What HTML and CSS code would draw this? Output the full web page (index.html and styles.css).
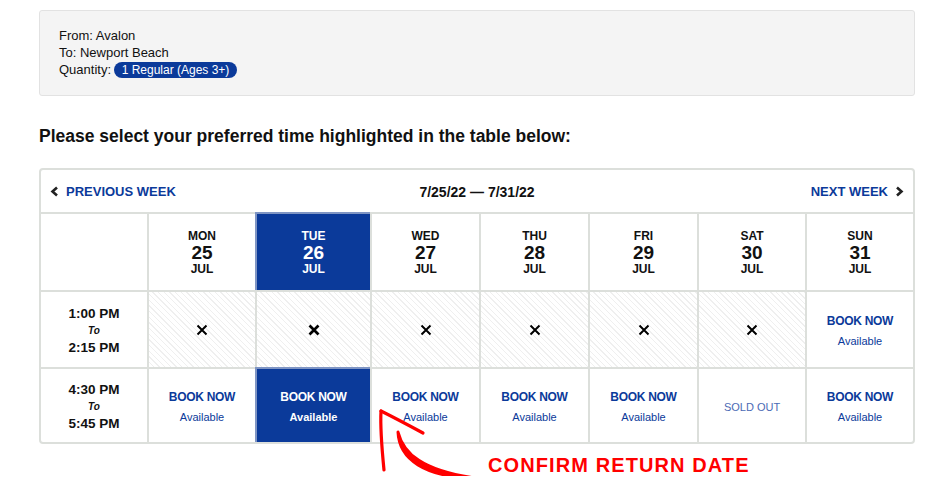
FILE: index.html
```html
<!DOCTYPE html>
<html>
<head>
<meta charset="utf-8">
<link rel="stylesheet" href="styles.css">
</head>
<body>
<div class="page">
  <div class="info">
    <div>From: Avalon</div>
    <div>To: Newport Beach</div>
    <div>Quantity: <span class="badge">1 Regular (Ages 3+)</span></div>
  </div>

  <h2 class="title">Please select your preferred time highlighted in the table below:</h2>

  <div class="sched">
    <div class="nav">
      <a class="navlink prev"><svg width="9" height="11" viewBox="0 0 9 11"><polyline points="7,1.5 2.5,5.5 7,9.5" fill="none" stroke="#222" stroke-width="2.6"/></svg>PREVIOUS WEEK</a>
      <span class="range">7/25/22 — 7/31/22</span>
      <a class="navlink next">NEXT WEEK<svg width="9" height="11" viewBox="0 0 9 11"><polyline points="2,1.5 6.5,5.5 2,9.5" fill="none" stroke="#222" stroke-width="2.6"/></svg></a>
    </div>
    <div class="grid">
      <div class="cell first"></div>
      <div class="cell day"><span class="dn">MON</span><span class="dd">25</span><span class="dm">JUL</span></div>
      <div class="cell day sel"><span class="dn">TUE</span><span class="dd">26</span><span class="dm">JUL</span></div>
      <div class="cell day"><span class="dn">WED</span><span class="dd">27</span><span class="dm">JUL</span></div>
      <div class="cell day"><span class="dn">THU</span><span class="dd">28</span><span class="dm">JUL</span></div>
      <div class="cell day"><span class="dn">FRI</span><span class="dd">29</span><span class="dm">JUL</span></div>
      <div class="cell day"><span class="dn">SAT</span><span class="dd">30</span><span class="dm">JUL</span></div>
      <div class="cell day"><span class="dn">SUN</span><span class="dd">31</span><span class="dm">JUL</span></div>

      <div class="cell first time"><span>1:00 PM</span><span class="to">To</span><span>2:15 PM</span></div>
      <div class="cell na"><svg class="x" width="12" height="12" viewBox="0 0 12 12"><path d="M1.5 1.5L10.5 10.5M10.5 1.5L1.5 10.5" stroke="#000" stroke-width="2"/></svg></div>
      <div class="cell na"><svg class="x" width="12" height="12" viewBox="0 0 12 12"><path d="M1.5 1.5L10.5 10.5M10.5 1.5L1.5 10.5" stroke="#000" stroke-width="2.7"/></svg></div>
      <div class="cell na"><svg class="x" width="12" height="12" viewBox="0 0 12 12"><path d="M1.5 1.5L10.5 10.5M10.5 1.5L1.5 10.5" stroke="#000" stroke-width="2"/></svg></div>
      <div class="cell na"><svg class="x" width="12" height="12" viewBox="0 0 12 12"><path d="M1.5 1.5L10.5 10.5M10.5 1.5L1.5 10.5" stroke="#000" stroke-width="2"/></svg></div>
      <div class="cell na"><svg class="x" width="12" height="12" viewBox="0 0 12 12"><path d="M1.5 1.5L10.5 10.5M10.5 1.5L1.5 10.5" stroke="#000" stroke-width="2"/></svg></div>
      <div class="cell na"><svg class="x" width="12" height="12" viewBox="0 0 12 12"><path d="M1.5 1.5L10.5 10.5M10.5 1.5L1.5 10.5" stroke="#000" stroke-width="2"/></svg></div>
      <div class="cell book"><span class="bn">BOOK NOW</span><span class="av">Available</span></div>

      <div class="cell first time"><span>4:30 PM</span><span class="to">To</span><span>5:45 PM</span></div>
      <div class="cell book"><span class="bn">BOOK NOW</span><span class="av">Available</span></div>
      <div class="cell book sel"><span class="bn">BOOK NOW</span><span class="av">Available</span></div>
      <div class="cell book"><span class="bn">BOOK NOW</span><span class="av">Available</span></div>
      <div class="cell book"><span class="bn">BOOK NOW</span><span class="av">Available</span></div>
      <div class="cell book"><span class="bn">BOOK NOW</span><span class="av">Available</span></div>
      <div class="cell sold"><span>SOLD OUT</span></div>
      <div class="cell book"><span class="bn">BOOK NOW</span><span class="av">Available</span></div>
    </div>
  </div>

  <div class="note">CONFIRM RETURN DATE</div>

  <svg class="arrow" width="120" height="90" viewBox="370 400 120 90">
    <path d="M381 411 C380 430 382 450 384 470" fill="none" stroke="#f00" stroke-width="3.2" stroke-linecap="round"/>
    <path d="M381 411 C395 418 410 426 423 433" fill="none" stroke="#f00" stroke-width="3.2" stroke-linecap="round"/>
    <path d="M398 432 C403 452 420 472 483 479 C422 478 399 458 398 432 Z" fill="#f00" stroke="#f00" stroke-width="3" stroke-linejoin="round"/>
  </svg>
</div>
</body>
</html>
```

FILE: styles.css
```css
* { box-sizing: border-box; }
html, body { margin: 0; padding: 0; background: #fff; }
body { font-family: "Liberation Sans", Arial, sans-serif; color: #111; }

.page {
  position: relative;
  width: 935px;
  padding: 10px 20px 0 39px;
}

.info {
  width: 876px;
  background: #f4f4f4;
  border: 1px solid #e2e2e2;
  border-radius: 3px;
  padding: 16px 19px 17px;
  font-size: 13px;
  line-height: 17px;
  color: #111;
}
.badge {
  display: inline-block;
  background: #0b3a9a;
  color: #fff;
  font-size: 12px;
  line-height: 16px;
  padding: 0 8px 0 8px;
  border-radius: 8px;
  margin-left: -1px;
}

.title {
  margin: 30px 0 22px;
  font-size: 17.5px;
  line-height: 20px;
  font-weight: bold;
  color: #111;
}

.sched {
  width: 876px;
  border: 2px solid #dcdfdb;
  border-radius: 4px;
  background: #fff;
}
.nav {
  height: 42px;
  display: grid;
  grid-template-columns: 1fr auto 1fr;
  align-items: center;
  padding: 1px 9px 0 9px;
  font-size: 13px;
  font-weight: bold;
}
.navlink {
  color: #0b3a9a;
  display: flex;
  align-items: center;
  gap: 7px;
}
.navlink.next { justify-self: end; }
.range { color: #111; font-size: 14px; }

.grid {
  display: grid;
  grid-template-columns: 106px 108px 115px 109px 109px 109px 108px 108px;
  grid-template-rows: 78px 77px 75px;
}
.cell {
  border-top: 2px solid #dcdfdb;
  border-left: 2px solid #dcdfdb;
  display: flex;
  flex-direction: column;
  align-items: center;
  justify-content: center;
  text-align: center;
}
.cell.first { border-left: none; }

.day { color: #111; font-weight: bold; padding-top: 2px; }
.dn { font-size: 12px; line-height: 14px; }
.dd { font-size: 19px; line-height: 19px; }
.dm { font-size: 12px; line-height: 15px; }
.day.sel { background: #0b3a9a; color: #fff; border-color: #7f95c4; }

.time { font-weight: bold; font-size: 13.5px; color: #111; padding-top: 2px; }
.time span { line-height: 17px; }
.time .to { font-style: italic; font-size: 10px; line-height: 17px; }

.na {
  background: repeating-linear-gradient(45deg, #fff 0, #fff 3px, #efefef 3px, #efefef 4px);
}
.x { display: block; }

.book { color: #0b3a9a; padding-top: 2px; }
.bn { font-size: 12px; font-weight: bold; line-height: 15px; letter-spacing: -0.3px; }
.av { font-size: 11px; line-height: 13px; margin-top: 6px; }
.book.sel { background: #0b3a9a; color: #fff; border-color: #7f95c4; }
.book.sel .av { font-weight: bold; }

.sold { color: #4b6ab5; font-size: 11px; padding-top: 2px; }

.note {
  padding: 10px 0 0 449px;
  color: #f00;
  font-weight: bold;
  font-size: 20px;
  line-height: 22px;
  letter-spacing: 1.1px;
}

.arrow {
  position: absolute;
  left: 370px;
  top: 400px;
}
```
